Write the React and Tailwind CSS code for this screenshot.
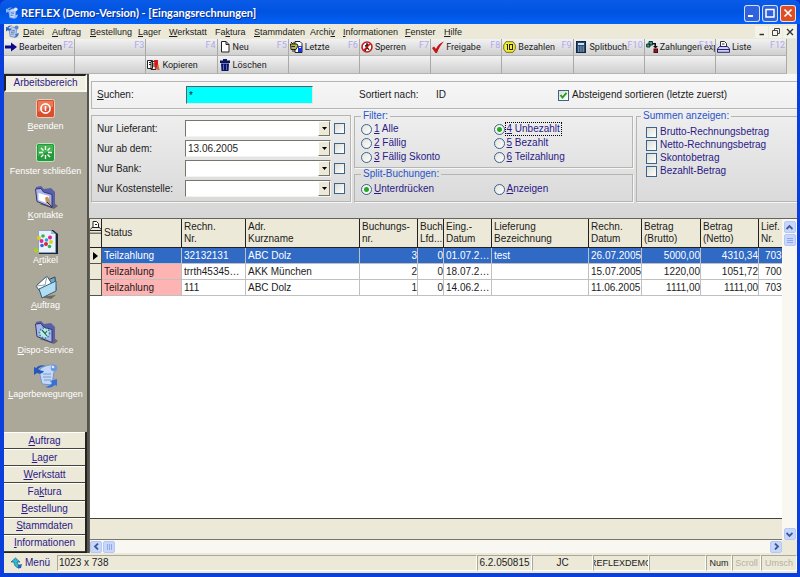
import React from "react";

/* ---------- small helpers ---------- */

// Renders a caption with its access key underlined; "&" precedes the key.
function Key({ text }) {
  const i = text.indexOf("&");
  if (i < 0) return <>{text}</>;
  return (
    <>
      {text.slice(0, i)}
      <span className="underline">{text[i + 1]}</span>
      {text.slice(i + 2)}
    </>
  );
}

/* ---------- icons ---------- */

const AppIcon = ({ className, light }) => (
  <svg className={className} viewBox="0 0 16 16" aria-hidden="true">
    <path d="M4 5 Q8 1 13 3 Q15 5 13 6 L12 14 L10 15 L5 14 L4 7 Z" fill={light ? "#c4dafb" : "#b9cdee"} stroke={light ? "#7ea6ea" : "#6c8cc4"} />
    <path d="M6 7.500 L11 6.500 M6 9.500 L11 8.500 M6 11.500 L10 11" stroke={light ? "#3f74d8" : "#5878b8"} strokeWidth="1" />
    <path d="M0 2 V8 L2 6.500 Q5 8 7 5 Q4 5 3 3.500 Q5 1.500 8 1 Q3 0 1.500 3 Z" fill={light ? "#8ab8fa" : "#2c62c8"} />
    <circle cx="13" cy="3" r="2.400" fill={light ? "#dce9ff" : "#5b86d6"} />
    <path d="M10 15.500 Q14 16 15.500 12 V9.500 L11 12 L12.500 13 Z" fill={light ? "#9cc3fb" : "#3f74d2"} />
  </svg>
);

const tb = "h-3 w-3 shrink-0";
const toolIcons = {
  edit: (
    <svg className="h-3 w-3 shrink-0" viewBox="0 0 12 12" aria-hidden="true">
      <path d="M0 4.500 H6 V1.500 L12 6 L6 10.500 V7.500 H0 Z" fill="#0a0a86" />
    </svg>
  ),
  copy: (
    <svg className="h-3 w-[13px] shrink-0" viewBox="0 0 13 12" aria-hidden="true">
      <path d="M.5 1.500 H5.500 V9.500 H.5 Z M4 2.500 H9 V10.500 H4 Z" fill="#fff" stroke="#222" />
      <path d="M2 3.500 H4 M2 5.500 H4 M5.500 5 H8 M5.500 7 H8" stroke="#222" />
      <path d="M7 1 H11 V5 L12.500 11 H10.500 L9.500 8 L8 11 Z" fill="#d81818" />
      <path d="M11 6 V11" stroke="#e0b020" />
    </svg>
  ),
  page: (
    <svg className={tb} viewBox="0 0 12 12" aria-hidden="true">
      <path d="M2.500 .5 H7 L10 3.500 V11 H2.500 Z M7 .5 V3.500 H10" fill="#fff" stroke="#222" />
    </svg>
  ),
  trash: (
    <svg className={tb} viewBox="0 0 12 12" aria-hidden="true">
      <path d="M4 0 H8 V1.500 H11 V4 H1 V1.500 H4 Z M2 4.500 H10 L9.500 12 H2.500 Z" fill="#0b1464" />
      <path d="M4.500 5.500 V11 M7.500 5.500 V11" stroke="#5e6cc8" />
    </svg>
  ),
  last: (
    <svg className="h-3 w-[13px] shrink-0" viewBox="0 0 13 12" aria-hidden="true">
      <path d="M5 .5 H10 L12 2.500 V11.500 H5 Z" fill="#fff" stroke="#222" />
      <path d="M.5 3 H7 L8 5 L6 8.500 H1 Z" fill="#b7bd3c" stroke="#222" />
      <path d="M1 1 L3 3 M4 1 V3 M2 10 H5 M1.500 5.500 H5" stroke="#222" />
      <path d="M8 5 H12 V11 H8 Z" fill="#2038d8" />
      <path d="M9 6.500 H11" stroke="#fff" />
    </svg>
  ),
  block: (
    <svg className={tb} viewBox="0 0 12 12" aria-hidden="true">
      <circle cx="6" cy="6" r="5" fill="#fff" stroke="#d01616" strokeWidth="1.600" />
      <path d="M6 2 V6 L4 10 M6 6 L8 9 M4 5 L8 4" stroke="#222" strokeWidth="1.300" fill="none" />
      <path d="M2.500 9.500 L9.500 2.500" stroke="#d01616" strokeWidth="1.500" />
    </svg>
  ),
  check: (
    <svg className={tb} viewBox="0 0 12 12" aria-hidden="true">
      <path d="M0 7 L2 5.500 L4 8 C6 4 8 2 12 .5 C9 3.500 6.500 7.500 5 12 H3.500 Z" fill="#c41414" />
    </svg>
  ),
  coin: (
    <svg className="h-3 w-[13px] shrink-0" viewBox="0 0 13 12" aria-hidden="true">
      <path d="M3 .7 H10 L12.300 4 V8 L10 11.300 H3 L.7 8 V4 Z" fill="#f3ee32" stroke="#77721a" />
      <path d="M4.500 3 V9 M3.500 4 L4.500 3" stroke="#222" fill="none" />
      <rect x="6.500" y="3.500" width="3" height="5" fill="none" stroke="#222" />
    </svg>
  ),
  calc: (
    <svg className="ml-px mr-0.5 h-3 w-[10px] shrink-0" viewBox="0 0 10 12" aria-hidden="true">
      <rect x=".5" y=".5" width="9" height="11" fill="#264a72" stroke="#14233c" />
      <rect x="2" y="2" width="6" height="2" fill="#cfe2f2" />
      <path d="M2 6 H8 M2 8 H8 M2 10 H8" stroke="#b9cfe6" strokeDasharray="1.300 1" />
    </svg>
  ),
  exportIcon: (
    <svg className="h-3 w-3 shrink-0" viewBox="0 0 12 12" aria-hidden="true">
      <path d="M3 .5 H6.500 V4 H3 Z M.7 3 H4 V6 H.7 Z" fill="#37a08b" stroke="#12352e" />
      <path d="M7 2 H10 V5 H12 L9.500 7.500 L7 5 H8.500 V3.500 H7 Z" fill="#111" />
      <rect x="8" y="8" width="3.500" height="3.500" fill="#9c1420" stroke="#4c0a10" />
    </svg>
  ),
  printer: (
    <svg className="h-3 w-[13px] shrink-0" viewBox="0 0 13 12" aria-hidden="true">
      <path d="M3.500 5.500 V.5 H7.500 L9.500 2.500 V5.500" fill="#fff" stroke="#333" />
      <path d="M5 3 H7.500" stroke="#333" />
      <path d="M2.500 5.500 H10.500 L12.500 8 V11.300 H.5 V8 Z" fill="#cfcdf2" stroke="#27246e" />
      <path d="M.5 8.500 H12.500" stroke="#27246e" />
    </svg>
  ),
};

const Folder = ({ children }) => (
  <svg className="h-6 w-6" viewBox="0 0 24 24" aria-hidden="true">
    <path d="M5 19 L20 24 L24 21 L20 18 Z" fill="#6e6b5e" />
    <path d="M2 2 L7 1 L10 4 L17 3 L21 7 V22 L18 23 L3 16 Z" fill="#5b5ea8" />
    <path d="M1.500 4 L7 3.500 L9.500 7 L18 9.500 V22.500 L3 16.500 Z" fill="#aab4ea" stroke="#34366f" />
    {children}
  </svg>
);

const sideIcons = {
  power: (
    <svg className="h-[19px] w-[19px]" viewBox="0 0 19 19" aria-hidden="true">
      <rect x=".5" y=".5" width="18" height="18" rx="2" fill="#db4e2c" stroke="#f5cabc" />
      <path d="M2 2 H17 V8 Q9 9 2 13 Z" fill="#ea7a58" />
      <circle cx="9.500" cy="9.500" r="4.600" fill="none" stroke="#fff" strokeWidth="1.600" />
      <path d="M9.500 7 V12" stroke="#fff" strokeWidth="1.600" />
    </svg>
  ),
  close: (
    <svg className="h-[19px] w-[19px]" viewBox="0 0 19 19" aria-hidden="true">
      <rect x=".5" y=".5" width="18" height="18" rx="2" fill="#219a3a" stroke="#bfe6c0" />
      <path d="M2 2 H17 V8 Q9 9 2 13 Z" fill="#45b552" />
      <path
        d="M9.500 3 V7 M9.500 12 V16 M3 9.500 H7 M12 9.500 H16 M5 5 L7.500 7.500 M11.500 11.500 L14 14 M14 5 L11.500 7.500 M7.500 11.500 L5 14"
        stroke="#fff"
        strokeWidth="1.400"
      />
    </svg>
  ),
  contacts: (
    <Folder>
      <path d="M4.500 8 L15 11 V19 L4.500 15 Z" fill="#fff" />
      <path d="M11 13 Q14 10 15 14 L17 20 L12 18 Z" fill="#c8935a" />
      <path d="M13 17 L18 22" stroke="#333" />
    </Folder>
  ),
  article: (
    <svg className="h-6 w-6" viewBox="0 0 24 24" aria-hidden="true">
      <path d="M5 0 H19 L24 4 V24 H5 Z" fill="#1c2438" />
      <path d="M4.500 .5 H17 L21.500 4 V22.500 H4.500 Z" fill="#e9f2fb" stroke="#8aa4c0" />
      <path d="M17 .5 V4 H21 Z" fill="#9db8d6" />
      <g>
        <circle cx="5" cy="8" r="2" fill="#d8d422" />
        <circle cx="9" cy="6" r="1.800" fill="#32b24c" />
        <circle cx="7.500" cy="11" r="2" fill="#e0249a" />
        <circle cx="12" cy="14" r="2" fill="#d3273f" />
        <circle cx="12.500" cy="10" r="1.800" fill="#27a9d8" />
        <circle cx="16" cy="7.500" r="2" fill="#e0249a" />
        <circle cx="17" cy="12" r="2" fill="#d8d422" />
        <circle cx="8" cy="15.500" r="1.800" fill="#2f6ad0" />
        <circle cx="15.500" cy="16.500" r="1.800" fill="#32b24c" />
        <circle cx="2.500" cy="20.500" r="2.300" fill="#a8d020" />
      </g>
    </svg>
  ),
  order: (
    <svg className="h-6 w-6" viewBox="0 0 24 24" aria-hidden="true">
      <path d="M6 22 L17 24 L22 20 Z" fill="#6e6b5e" />
      <path d="M4 9 L21 2 L22 15 L9 22 Z" fill="#76a6c8" stroke="#284a62" />
      <path d="M2 11 L13 1 L18 9 L8 19 Z" fill="#fff" stroke="#3d5468" />
      <path d="M2 11 L11 10 L13 1" fill="none" stroke="#8aa0b2" />
      <path d="M5 14 L22 6 V16 L8 23 Z" fill="#b2dcf2" stroke="#35607c" />
    </svg>
  ),
  dispo: (
    <Folder>
      <ellipse cx="10.500" cy="13" rx="5" ry="5" fill="#c2e4f0" stroke="#2b8f92" strokeWidth="1.600" strokeDasharray="1.500 1.500" />
      <path d="M8 10 L11 13.500 L13 11 M11 13.500 L13 16" stroke="#1e6f4a" fill="none" strokeWidth="1.200" />
    </Folder>
  ),
  stock: (
    <svg className="h-6 w-6" viewBox="0 0 24 24" aria-hidden="true">
      <path d="M6 5 Q12 0 21 1 Q24 4 20 8 L18 21 L8 20 L6 11 Z" fill="#c3d8f6" stroke="#7894c4" />
      <path d="M9 10 H17 M9 13 H17 M10 16 H17" stroke="#7f99ca" />
      <path d="M0 3 V11 L3 9 Q8 11 10 7 Q6 7 4 5 Q7 2 12 2 Q5 0 2 4 Z" fill="#2458c0" />
      <path d="M23 15 V22 L21 21 Q17 25 11 23 Q16 22 18 19 L16 17 Z" fill="#3670d8" />
      <circle cx="20" cy="4" r="3.300" fill="#6b98e2" />
      <circle cx="19" cy="3" r="1.300" fill="#e2eeff" />
    </svg>
  ),
};

const Chevron = ({ d }) => (
  <svg className="h-[7px] w-[7px]" viewBox="0 0 7 7" aria-hidden="true">
    <path d={d} fill="none" stroke="#3d5a94" strokeWidth="1.800" />
  </svg>
);

/* ---------- data ---------- */

const menus = [
  ["&Datei", "w-[29px]"], ["&Auftrag", "w-[38px]"], ["&Bestellung", "w-12"], ["&Lager", "w-[31px]"],
  ["&Werkstatt", "w-[46px]"], ["Fa&ktura", "w-[39px]"], ["&Stammdaten", "w-14"], ["Archi&v", "w-[33px]"],
  ["&Informationen", "w-[62px]"], ["&Fenster", "w-[39px]"], ["&Hilfe", "w-8"],
];

const tools = [
  ["Bearbeiten", "F2", "edit", "", ""],
  ["", "F3", "", "", ""],
  ["", "F4", "", "Kopieren", "copy"],
  ["Neu", "F5", "page", "Löschen", "trash"],
  ["Letzte", "F6", "last", "", ""],
  ["Sperren", "F7", "block", "", ""],
  ["Freigabe", "F8", "check", "", ""],
  ["Bezahlen", "F9", "coin", "", ""],
  ["Splitbuch.", "F10", "calc", "", ""],
  ["Zahlungen exp", "F11", "exportIcon", "", ""],
  ["Liste", "F12", "printer", "", ""],
];

const sideItems = [
  ["&Beenden", "power"], ["Fenster schließen", "close"], ["&Kontakte", "contacts"], ["A&rtikel", "article"],
  ["&Auftrag", "order"], ["&Dispo-Service", "dispo"], ["&Lagerbewegungen", "stock"],
];

const sections = ["&Auftrag", "&Lager", "&Werkstatt", "Fa&ktura", "&Bestellung", "&Stammdaten", "&Informationen"];

const columns = [
  ["Status", "", "w-20", false],
  ["Rechn.", "Nr.", "w-16", false],
  ["Adr.", "Kurzname", "w-[114px]", false],
  ["Buchungs-", "nr.", "w-[58px]", true],
  ["Buch", "Lfd...", "w-[26px]", true],
  ["Eing.-", "Datum", "w-12", false],
  ["Lieferung", "Bezeichnung", "w-[97px]", false],
  ["Rechn.", "Datum", "w-[53px]", false],
  ["Betrag", "(Brutto)", "w-[59px]", true],
  ["Betrag", "(Netto)", "w-[58px]", true],
  ["Lief.", "Nr.", "w-10", false],
];

const rows = [
  ["Teilzahlung", "32132131", "ABC Dolz", "3", "0", "01.07.2005", "test", "26.07.2005", "5000,00", "4310,34", "70301"],
  ["Teilzahlung", "trrth45345345", "AKK München", "2", "0", "18.07.2005", "", "15.07.2005", "1220,00", "1051,72", "70001"],
  ["Teilzahlung", "111", "ABC Dolz", "1", "0", "14.06.2005", "", "11.06.2005", "1111,00", "1111,00", "70301"],
];

/* ---------- controls ---------- */

const Tick = ({ id, checked }) => (
  <span className="relative flex h-[11px] w-[11px] shrink-0">
    <input
      id={id}
      type="checkbox"
      defaultChecked={checked}
      aria-label={id}
      className="peer h-[11px] w-[11px] appearance-none border border-[#3c6488] bg-linear-to-br from-[#dcdcd7] to-white"
    />
    <svg className="pointer-events-none absolute inset-0 hidden h-[11px] w-[11px] peer-checked:block" viewBox="0 0 11 11" aria-hidden="true">
      <path d="M2.500 5 L4.500 7.500 L8.500 2.800" fill="none" stroke="#21a121" strokeWidth="1.900" />
    </svg>
  </span>
);

const Radio = ({ name, text, checked, focus }) => (
  <label className="flex h-[14px] items-center text-[#2b1a86]">
    <input
      type="radio"
      name={name}
      defaultChecked={checked}
      className="h-[11px] w-[11px] shrink-0 appearance-none rounded-full border border-[#3c6488] bg-linear-to-br from-[#e2e2dd] to-white checked:bg-[radial-gradient(circle,#25a825_0_2px,#f4f4f0_3px)]"
    />
    <span className={focus ? "border border-dotted border-black px-px" : "ml-0.5"}>
      <Key text={text} />
    </span>
  </label>
);

const FilterSelect = ({ label, value }) => (
  <div className="flex h-[17px] items-center">
    <label htmlFor={label} className="w-[88px] shrink-0">{label}</label>
    <div className="relative h-[17px] w-[146px] shrink-0">
      <select
        id={label}
        defaultValue={value}
        className="h-[17px] w-full appearance-none border border-t-[#77766c] border-l-[#77766c] border-r-[#f4f3ec] border-b-[#f4f3ec] bg-white px-0.5 text-[10px] leading-3"
      >
        <option value={value}>{value}</option>
      </select>
      <span className="pointer-events-none absolute top-px right-px flex h-[15px] w-3 items-center justify-center border border-t-white border-l-white border-r-[#77766c] border-b-[#77766c] bg-[#ece9d8]">
        <svg className="h-[3px] w-[5px]" viewBox="0 0 5 3" aria-hidden="true"><path d="M0 0 H5 L2.500 3 Z" fill="#000" /></svg>
      </span>
    </div>
    <span className="ml-[3px] flex"><Tick id={label + " aktiv"} /></span>
  </div>
);

const scrollBtn = "flex h-3 w-3 shrink-0 items-center justify-center rounded-xs border border-[#b4c8f6] bg-[#c8d6fb]";

/* ---------- page parts ---------- */

function TitleBar() {
  const btn = "flex h-[17px] w-4 items-center justify-center rounded-[3px] border border-white/80";
  return (
    <header className="flex h-6 shrink-0 items-center rounded-t-md bg-linear-to-b from-[#0a5be8] via-[#0053e0] to-[#0462f8] pt-0.5 pr-1 pl-1.5">
      <AppIcon className="h-3 w-3" light />
      <h1 className="ml-[3px] flex-1 font-[Lato,sans-serif] text-[11px] leading-4 font-bold whitespace-nowrap text-white [text-shadow:1px_1px_0_#0a2d90]">
        REFLEX (Demo-Version) - [Eingangsrechnungen]
      </h1>
      <div className="flex gap-0.5">
        <button aria-label="Minimieren" className={btn + " bg-[#2f62dc]"}>
          <svg className="h-2.5 w-2.5" viewBox="0 0 10 10"><path d="M1 8 H6" stroke="#fff" strokeWidth="2" /></svg>
        </button>
        <button aria-label="Maximieren" className={btn + " bg-[#2f62dc]"}>
          <svg className="h-2.5 w-2.5" viewBox="0 0 10 10"><path d="M.5 1.500 H9.500 M1 1 V9 H9 V1" fill="none" stroke="#fff" strokeWidth="1.500" /></svg>
        </button>
        <button aria-label="Schließen" className={btn + " bg-[#de4f26]"}>
          <svg className="h-2.5 w-2.5" viewBox="0 0 10 10"><path d="M1.500 1.500 L8.500 8.500 M8.500 1.500 L1.500 8.500" stroke="#fff" strokeWidth="1.700" /></svg>
        </button>
      </div>
    </header>
  );
}

function MenuBar() {
  const btn = "flex h-3 w-[13px] items-center justify-center bg-[#f4f3ea]";
  return (
    <nav className="flex h-[15px] shrink-0 items-center bg-[#ece9d8] pl-0.5 text-[9px]">
      <AppIcon className="mr-1 h-[13px] w-[13px]" />
      {menus.map(([m, w]) => (
        <button key={m} className={w + " text-left whitespace-nowrap"}><Key text={m} /></button>
      ))}
      <div className="ml-auto flex gap-px pr-px">
        <button aria-label="Fenster minimieren" className={btn}>
          <svg className="h-2 w-2" viewBox="0 0 8 8"><path d="M1.500 6.500 H6" stroke="#333" strokeWidth="1.500" /></svg>
        </button>
        <button aria-label="Fenster wiederherstellen" className={btn}>
          <svg className="h-2 w-2" viewBox="0 0 8 8"><path d="M2.500 2.500 V.5 H7.500 V5.500 H5.500 M.5 2.500 H5.500 V7.500 H.5 Z" fill="none" stroke="#444" /></svg>
        </button>
        <button aria-label="Dokument schließen" className={btn}>
          <svg className="h-2 w-2" viewBox="0 0 8 8"><path d="M1 1 L7 7 M7 1 L1 7" stroke="#333" strokeWidth="1.400" /></svg>
        </button>
      </div>
    </nav>
  );
}

function ToolBar() {
  const cell =
    "relative flex w-full items-center gap-0.5 overflow-hidden border-r border-b border-r-[#a9a9a6] border-b-[#b4b4b0] bg-linear-to-b from-[#f2f2f2] to-[#cfcfcf] pl-px text-left whitespace-nowrap";
  return (
    <div className="flex h-[35px] shrink-0 bg-[#e4e3dc] pr-2.5 font-[Roboto,sans-serif] text-[9px]">
      {tools.map(([a, f, ia, b, ib]) => (
        <div key={f} className="flex min-w-0 flex-1 flex-col">
          <button aria-label={a || f} className={cell + " h-[17px]"}>
            {toolIcons[ia]}
            <span>{a}</span>
            <span className="absolute top-0 right-px leading-3 text-[#b0a8ee]">{f}</span>
          </button>
          <button aria-label={b || "Umschalt " + f} className={cell + " h-[18px]"}>
            {toolIcons[ib]}
            <span>{b}</span>
          </button>
        </div>
      ))}
    </div>
  );
}

function SideBar() {
  return (
    <aside className="flex w-[85px] shrink-0 flex-col border-r-2 border-r-[#55544c] bg-[#aca899]">
      <button className="h-[18px] shrink-0 border-2 border-t-[#222] border-l-[#222] border-r-[#f8f7f0] border-b-[#f8f7f0] bg-[#f1efe4] leading-3 text-[#2b1a86]">
        Arbeitsbereich
      </button>
      <div className="grid h-[317px] shrink-0 grid-rows-7 pt-1 text-[9px] text-white">
        {sideItems.map(([t, icon]) => (
          <button key={t} className="flex min-h-0 flex-col items-center justify-start whitespace-nowrap">
            <span className="flex h-6 items-center">{sideIcons[icon]}</span>
            <span className="leading-3"><Key text={t} /></span>
          </button>
        ))}
      </div>
      <div className="mt-auto grid h-[121px] shrink-0 grid-rows-7 border-r-2 border-b border-[#222] text-[#2b1a86]">
        {sections.map((s) => (
          <button key={s} className="min-h-0 border-t border-b border-t-white border-b-[#44433c] bg-[#ece9d8] leading-3">
            <Key text={s} />
          </button>
        ))}
      </div>
    </aside>
  );
}

function Filters() {
  const group = "border border-[#b5b5b2] shadow-[1px_1px_0_#f6f6f6]";
  return (
    <form className="flex shrink-0 flex-col bg-linear-to-b from-[#f8f8f8] to-[#d6d6d6] pt-[7px] pb-4 pl-0.5">
      <div className={group + " flex h-7 items-center border-r-0 pl-[5px]"}>
        <label htmlFor="suchen" className="w-[89px]"><Key text="&Suchen:" /></label>
        <input
          id="suchen"
          defaultValue="*"
          className="h-[18px] w-[127px] border border-t-[#55605f] border-l-[#55605f] border-r-[#d8ecec] border-b-[#d8ecec] bg-[#00ffff] px-0.5 text-[10px] outline-none"
        />
        <span className="ml-[46px] w-[77px]">Sortiert nach:</span>
        <span className="w-[122px]">ID</span>
        <label className="flex items-center gap-[3px]">
          <Tick id="Absteigend" checked />
          Absteigend sortieren (letzte zuerst)
        </label>
      </div>
      <div className="flex gap-[3px] pt-px">
        <div className={group + " mt-[5px] flex w-[260px] shrink-0 flex-col gap-[3px] pt-1 pl-[5px]"}>
          <FilterSelect label="Nur Lieferant:" value="" />
          <FilterSelect label="Nur ab dem:" value="13.06.2005" />
          <FilterSelect label="Nur Bank:" value="" />
          <FilterSelect label="Nur Kostenstelle:" value="" />
        </div>
        <div className="flex w-[279px] shrink-0 flex-col">
          <fieldset className={group + " h-[58px] px-1.5"}>
            <legend className="px-0.5 leading-3 text-[#2a55c8]">Filter:</legend>
            <div className="grid grid-cols-2">
              <div>
                <Radio name="filter" text="&1 Alle" />
                <Radio name="filter" text="&2 Fällig" />
                <Radio name="filter" text="&3 Fällig Skonto" />
              </div>
              <div>
                <Radio name="filter" text="&4 Unbezahlt" checked focus />
                <Radio name="filter" text="&5 Bezahlt" />
                <Radio name="filter" text="&6 Teilzahlung" />
              </div>
            </div>
          </fieldset>
          <fieldset className={group + " h-[34px] px-1.5"}>
            <legend className="px-0.5 leading-3 text-[#2a55c8]">Split-Buchungen:</legend>
            <div className="grid grid-cols-2 pt-0.5">
              <Radio name="split" text="&Unterdrücken" checked />
              <Radio name="split" text="&Anzeigen" />
            </div>
          </fieldset>
        </div>
        <fieldset className={group + " min-w-0 flex-1 border-r-0 px-1"}>
          <legend className="px-0.5 leading-3 text-[#2a55c8]">Summen anzeigen:</legend>
          <div className="flex flex-col gap-px pt-1 pl-[5px] text-[#2b1a86]">
            {["Brutto-Rechnungsbetrag", "Netto-Rechnungsbetrag", "Skontobetrag", "Bezahlt-Betrag"].map((t) => (
              <label key={t} className="flex h-3 items-center gap-[3px]">
                <Tick id={t} />
                {t}
              </label>
            ))}
          </div>
        </fieldset>
      </div>
    </form>
  );
}

function Grid() {
  return (
    <div className="flex min-h-0 flex-1 border-t border-l border-[#66655c] bg-white">
      <div className="flex min-w-0 flex-1 flex-col">
        <div className="min-h-0 flex-1 overflow-hidden">
          <table className="w-max border-separate border-spacing-0">
            <thead>
              <tr className="h-[29px] bg-[#ece9d8]">
                <th className="w-3 border-r border-b border-[#222] p-0 align-top">
                  <svg className="mt-px h-[15px] w-[11px]" viewBox="0 0 11 15" aria-hidden="true">
                    <path d="M3 7 V1.500 H6.500 L8.500 3.500 V7 M5 4.500 H7" fill="#fff" stroke="#222" />
                    <path d="M.5 9.500 L2 7.500 H9.500 L11 9.500 M0 10.500 H11" fill="none" stroke="#222" />
                    <path d="M0 12.500 H11 V14 H0 Z" fill="#77766e" />
                  </svg>
                </th>
                {columns.map(([a, b, w], i) => (
                  <th key={i} className="border-r border-b border-[#222] p-0 text-left font-normal">
                    <div className={w + " -mr-px overflow-hidden pr-px pl-0.5 leading-3 whitespace-nowrap"}>
                      {a}
                      {b && <br />}
                      {b}
                    </div>
                  </th>
                ))}
              </tr>
            </thead>
            <tbody>
              {rows.map((r, ri) => (
                <tr key={ri} className={ri === 0 ? "h-4 bg-[#316ac5] text-white" : "h-4"}>
                  <td className="border-r border-b border-[#55544c] bg-[#ece9d8] p-0">
                    {ri === 0 && (
                      <svg className="ml-[3px] h-2 w-[5px]" viewBox="0 0 5 8" aria-hidden="true"><path d="M0 0 L5 4 L0 8 Z" fill="#000" /></svg>
                    )}
                  </td>
                  {r.map((c, ci) => (
                    <td
                      key={ci}
                      className={
                        (ci === 0 && ri > 0 ? "bg-[#ffb4b4] " : "") +
                        (columns[ci][3] ? "text-right " : "text-left ") +
                        "border-r border-b border-[#c0c0c0] p-0"
                      }
                    >
                      <div
                        className={
                          columns[ci][2] + " -mr-px pr-px leading-3 whitespace-nowrap " +
                          (ci === 7 ? "overflow-hidden pl-0.5" : ci === 10 ? "overflow-hidden pl-1.5" : "truncate pl-0.5")
                        }
                      >
                        {c}
                      </div>
                    </td>
                  ))}
                </tr>
              ))}
            </tbody>
          </table>
        </div>
        <div className="h-[22px] shrink-0 border-t border-b border-t-[#44433c] border-b-[#77766c] bg-[#ece9d8]" />
        <div className="flex h-[13px] shrink-0 items-center gap-px bg-[#f8f7f2]">
          <button aria-label="Nach links" className={scrollBtn}><Chevron d="M5 .5 L2 3.500 L5 6.500" /></button>
          <button aria-label="Bildlauf" className={scrollBtn + " gap-px"}>
            <i className="h-1.5 w-px bg-[#8fa9ea]" /><i className="h-1.5 w-px bg-[#8fa9ea]" /><i className="h-1.5 w-px bg-[#8fa9ea]" />
          </button>
          <button aria-label="Nach rechts" className={scrollBtn + " ml-auto"}><Chevron d="M2 .5 L5 3.500 L2 6.500" /></button>
        </div>
      </div>
      <div className="flex w-[15px] shrink-0 flex-col">
        <div className="flex min-h-0 flex-1 flex-col items-center gap-px bg-[#f8f7f2] pt-0.5">
          <button aria-label="Nach oben" className={scrollBtn}><Chevron d="M.5 5 L3.500 2 L6.500 5" /></button>
          <button aria-label="Bildlauf senkrecht" className={scrollBtn + " flex-col gap-px"}>
            <i className="h-px w-1.5 bg-[#8fa9ea]" /><i className="h-px w-1.5 bg-[#8fa9ea]" /><i className="h-px w-1.5 bg-[#8fa9ea]" />
          </button>
          <button aria-label="Nach unten" className={scrollBtn + " mt-auto"}><Chevron d="M.5 2 L3.500 5 L6.500 2" /></button>
        </div>
        <div className="h-[13px] bg-[#ece9d8]" />
      </div>
    </div>
  );
}

function StatusBar() {
  const cell = "flex h-4 items-center overflow-hidden border border-t-[#aca899] border-l-[#aca899] border-r-white border-b-white whitespace-nowrap";
  return (
    <footer className="flex h-5 shrink-0 items-center bg-[#ece9d8]">
      <button className="flex w-[53px] items-center gap-0.5 pl-[7px] text-[#2b1a86]">
        <svg className="h-3 w-3" viewBox="0 0 12 12" aria-hidden="true">
          <path d="M0 5 L4.500 1 L9 5 H6 Q6 8 9 8.500 L8 11 Q3 10 3 5 Z" fill="#2bc0d0" stroke="#1c5a86" strokeWidth=".7" />
          <path d="M7 8 L11 7 L10 11 L7 11.500 Z" fill="#2a62b8" />
        </svg>
        Menü
      </button>
      <div className={cell + " flex-1 pl-px"}>1023 x 738</div>
      <div className={cell + " w-[55px] justify-center"}>6.2.050815</div>
      <div className={cell + " w-[61px] justify-center"}>JC</div>
      <div className={cell + " w-14 justify-center text-[9px]"}>REFLEXDEMO</div>
      <div className={cell + " w-[57px]"} />
      <div className={cell + " w-[26px] justify-center text-[9px]"}>Num</div>
      <div className={cell + " w-[29px] justify-center text-[9px] text-[#b4b09f]"}>Scroll</div>
      <div className={cell + " w-9 justify-center text-[9px] text-[#b4b09f]"}>Umsch</div>
    </footer>
  );
}

export default function App() {
  return (
    <div className="flex h-screen flex-col bg-[#0831d9] font-['Liberation_Sans',Arial,sans-serif] text-[10px] leading-3 text-[#1c1c1c]">
      <TitleBar />
      <div className="flex min-h-0 flex-1 flex-col border-r-[3px] border-b-4 border-l-4 border-[#0a3fdc]">
        <MenuBar />
        <ToolBar />
        <div className="flex min-h-0 flex-1">
          <SideBar />
          <main className="flex min-w-0 flex-1 flex-col overflow-hidden bg-[#d6d6d6]">
            <Filters />
            <Grid />
          </main>
        </div>
        <StatusBar />
      </div>
    </div>
  );
}
